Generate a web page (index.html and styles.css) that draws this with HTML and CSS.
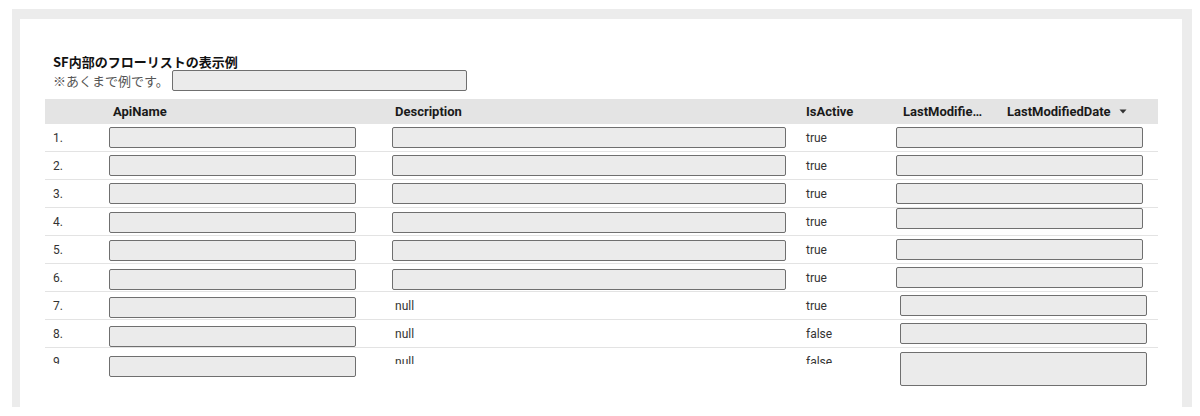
FILE: index.html
```html
<!DOCTYPE html>
<html lang="ja">
<head>
<meta charset="utf-8">
<title>SF内部のフローリストの表示例</title>
<link rel="stylesheet" href="styles.css">
</head>
<body>
<div class="frame">
  <div class="card">
    <div class="title">SF内部のフローリストの表示例</div>
    <div class="note"><span>※あくまで例です。</span><span class="box note-box"></span></div>
    <div class="table">
      <div class="row head">
        <div class="cell"></div>
        <div class="cell h1">ApiName</div>
        <div class="cell h2">Description</div>
        <div class="cell h3">IsActive</div>
        <div class="cell h4"><span class="ell">LastModifiedBy</span></div>
        <div class="cell h5">LastModifiedDate <svg class="caret" width="8" height="5" viewBox="0 0 8 5"><path d="M0.5 0.5 L7.5 0.5 L4 4.5 Z" fill="#333"/></svg></div>
      </div>
      <div class="row"><div class="cell num">1.</div><div class="cell"><span class="box b1"></span></div><div class="cell"><span class="box b2"></span></div><div class="cell t">true</div><div class="cell span"><span class="box b4"></span></div></div>
      <div class="row"><div class="cell num">2.</div><div class="cell"><span class="box b1"></span></div><div class="cell"><span class="box b2"></span></div><div class="cell t">true</div><div class="cell span"><span class="box b4"></span></div></div>
      <div class="row"><div class="cell num">3.</div><div class="cell"><span class="box b1"></span></div><div class="cell"><span class="box b2"></span></div><div class="cell t">true</div><div class="cell span"><span class="box b4"></span></div></div>
      <div class="row"><div class="cell num">4.</div><div class="cell"><span class="box b1 dn"></span></div><div class="cell"><span class="box b2 dn"></span></div><div class="cell t">true</div><div class="cell span"><span class="box b4 up"></span></div></div>
      <div class="row"><div class="cell num">5.</div><div class="cell"><span class="box b1 dn"></span></div><div class="cell"><span class="box b2 dn"></span></div><div class="cell t">true</div><div class="cell span"><span class="box b4"></span></div></div>
      <div class="row"><div class="cell num">6.</div><div class="cell"><span class="box b1 dn2"></span></div><div class="cell"><span class="box b2 dn2"></span></div><div class="cell t">true</div><div class="cell span"><span class="box b4"></span></div></div>
      <div class="row"><div class="cell num">7.</div><div class="cell"><span class="box b1 dn2"></span></div><div class="cell t">null</div><div class="cell t">true</div><div class="cell span"><span class="box b4 shift"></span></div></div>
      <div class="row"><div class="cell num">8.</div><div class="cell"><span class="box b1 dn3"></span></div><div class="cell t">null</div><div class="cell t">false</div><div class="cell span"><span class="box b4 shift"></span></div></div>
      <div class="row last"><div class="cell num clip">9.</div><div class="cell top"><span class="box b1 low"></span></div><div class="cell t clip">null</div><div class="cell t clip">false</div><div class="cell span top"><span class="box b4 shift tall"></span></div></div>
    </div>
  </div>
</div>
</body>
</html>
```

FILE: styles.css
```css
html, body {
  margin: 0;
  padding: 0;
  background: #ffffff;
}
body {
  font-family: Roboto, "Noto Sans CJK JP", "Liberation Sans", sans-serif;
  color: #333;
  width: 1200px;
  height: 416px;
  overflow: hidden;
}
.frame {
  margin: 9px 0 0 12px;
  width: 1180px;
  height: 398px;
  background: #ececec;
  padding: 10px 10px 0 8px;
  box-sizing: border-box;
}
.card {
  background: #fff;
  height: 100%;
  padding: 34px 0 0 25px;
  box-sizing: border-box;
}
.title {
  font-family: "Noto Sans CJK JP", Roboto, sans-serif;
  font-weight: 700;
  font-size: 13px;
  line-height: 17px;
  color: #111;
  padding-left: 8px;
}
.note {
  display: flex;
  align-items: center;
  font-family: "Noto Sans CJK JP", Roboto, sans-serif;
  font-size: 13px;
  color: #555;
  padding-left: 8px;
  height: 20px;
}
.box {
  display: block;
  box-sizing: border-box;
  height: 21px;
  background: #ebebeb;
  border: 1.5px solid #6f6f6f;
  border-radius: 2px;
}
.note-box {
  width: 295px;
  margin-left: 3px;
}
.table {
  margin-top: 9px;
  width: 1113px;
}
.row {
  display: grid;
  grid-template-columns: 64px 283px 411px 93px 104px 158px;
  height: 28px;
  border-bottom: 1px solid #e3e3e3;
  box-sizing: border-box;
  font-size: 12px;
  align-items: center;
}
.row.head {
  height: 25px;
  background: #e4e4e4;
  border-bottom: 0;
  font-weight: 700;
  font-size: 13px;
  color: #1a1a1a;
}
.cell {
  white-space: nowrap;
  min-width: 0;
}
.num { padding-left: 8px; }
.h1 { padding-left: 4px; }
.h2, .h3 { padding-left: 3px; }
.t { padding-left: 3px; }
.h4 { padding-left: 7px; }
.h4 .ell {
  display: block;
  overflow: hidden;
  text-overflow: ellipsis;
  width: 84px;
}
.h5 { padding-left: 7px; display: flex; align-items: center; gap: 8px; }
.caret { display: block; }
.span { grid-column: span 2; }
.b1 { width: 247px; }
.b2 { width: 394px; }
.b4 { width: 247px; }
.dn { transform: translateY(1px); }
.dn2 { transform: translateY(2px); }
.dn3 { transform: translateY(3px); }
.up { transform: translateY(-3px); }
.shift { margin-left: 4px; }
.row.last {
  height: 16px;
  border-bottom: 0;
  align-items: start;
}
.clip {
  height: 16px;
  line-height: 28px;
  overflow: hidden;
}
.top { align-self: start; }
.low { margin-top: 8px; }
.tall { height: 34px; margin-top: 4px; }
```
